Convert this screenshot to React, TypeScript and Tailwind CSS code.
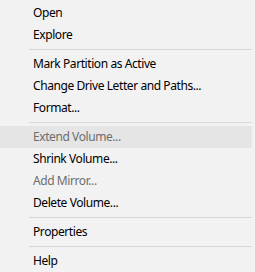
import React from "react";

type Item = { label?: string; disabled?: boolean; hover?: boolean; sep?: boolean };

const items: Item[] = [
  { label: "Open" },
  { label: "Explore" },
  { sep: true },
  { label: "Mark Partition as Active" },
  { label: "Change Drive Letter and Paths..." },
  { label: "Format..." },
  { sep: true },
  { label: "Extend Volume...", disabled: true, hover: true },
  { label: "Shrink Volume..." },
  { label: "Add Mirror...", disabled: true },
  { label: "Delete Volume..." },
  { sep: true },
  { label: "Properties" },
  { sep: true },
  { label: "Help" },
];

export default function App() {
  return (
    <div className="w-[255px] h-[272px] bg-[#f2f2f2] pt-[2px] overflow-hidden text-[12px] tracking-[-0.42px] text-black" style={{ fontFamily: '"Noto Sans", sans-serif' }}>
      {items.map((it, i) =>
        it.sep ? (
          <div key={i} className="h-[7px] flex items-center pl-[29px] pr-[3px]">
            <div className="h-px w-full bg-[#d7d7d7]" />
          </div>
        ) : (
          <div
            key={i}
            className={`h-[22px] flex items-center pl-[33px] mr-[3px] ${it.hover ? "bg-[#e5e5e5]" : ""} ${it.disabled ? "text-[#6d6d6d]" : ""}`}
          >
            {it.label}
          </div>
        )
      )}
    </div>
  );
}
